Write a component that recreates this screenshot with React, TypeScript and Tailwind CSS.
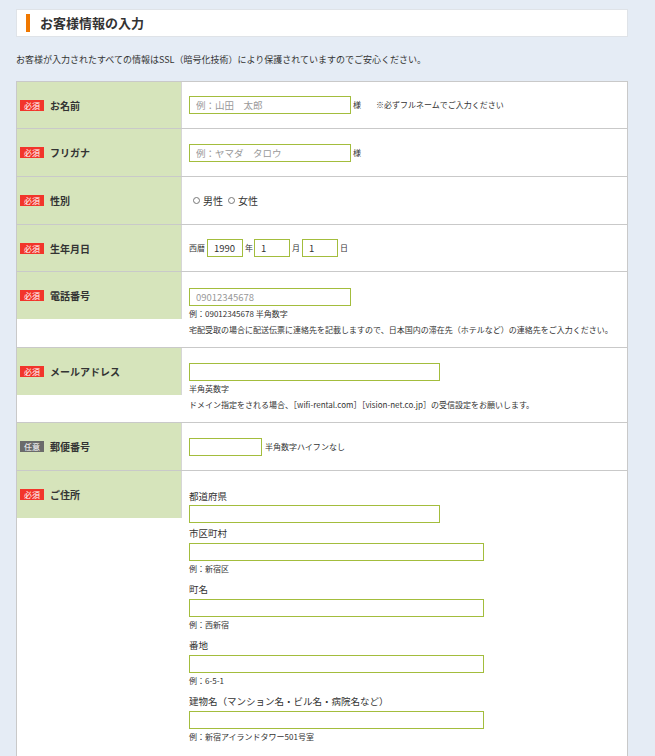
import type { ReactNode } from "react";

function Badge({ optional }: { optional?: boolean }) {
  return (
    <span
      className={
        optional
          ? "inline-block w-[24px] h-[11px] bg-[#6b6b6b] text-white text-[8px] leading-[11px] text-center"
          : "inline-block w-[24px] h-[11px] bg-[#f2352b] text-white text-[8px] leading-[11px] text-center"
      }
    >
      {optional ? "任意" : "必須"}
    </span>
  );
}

function Row({
  label,
  optional,
  short,
  valueClass,
  children,
}: {
  label: string;
  optional?: boolean;
  short?: boolean;
  valueClass: string;
  children: ReactNode;
}) {
  return (
    <div className="flex border-b border-[#c9c9c9]">
      <div
        className={
          short
            ? "self-start w-[165px] h-[46px] shrink-0 bg-[#d6e4bb] border-r border-[#d6d6d6] flex items-center pl-[3px]"
            : "self-start w-[165px] h-[47px] shrink-0 bg-[#d6e4bb] border-r border-[#d6d6d6] flex items-center pl-[3px]"
        }
      >
        <Badge optional={optional} />
        <span className="ml-[6px] text-[10px] font-bold text-[#333]">{label}</span>
      </div>
      <div className={valueClass}>{children}</div>
    </div>
  );
}

function Field({ w, placeholder, value }: { w: string; placeholder?: string; value?: string }) {
  return (
    <input
      className={
        "block h-[18px] border border-[#a3bd3d] bg-white px-[6px] text-[9.5px] text-[#333] placeholder:text-[#999] outline-none " +
        w
      }
      placeholder={placeholder}
      defaultValue={value}
    />
  );
}

function Note({ children }: { children: ReactNode }) {
  return <p className="text-[8px] leading-[16px] text-[#333]">{children}</p>;
}

function SubLabel({ children }: { children: ReactNode }) {
  return <p className="mt-[4px] mb-[2px] text-[9.5px] leading-[16px] text-[#333]">{children}</p>;
}

function Radio({ label }: { label: string }) {
  return (
    <span className="flex items-center">
      <span className="w-[7px] h-[7px] rounded-full border border-[#777] bg-white" />
      <span className="ml-[3px] text-[10px] text-[#333]">{label}</span>
    </span>
  );
}

export default function App() {
  return (
    <div className="h-[756px] overflow-hidden bg-[#e5ecf5] pl-[16px] pr-[27px] pt-[9px] font-['Noto_Sans_CJK_JP','Noto_Sans',sans-serif]">
      {/* Section header */}
      <div className="h-[28px] bg-white border border-[#dfe3e8] flex items-center pl-[9px]">
        <div className="w-[4px] h-[18px] bg-[#f07800]" />
        <h1 className="ml-[10px] text-[13px] font-bold text-[#333]">お客様情報の入力</h1>
      </div>

      <p className="mt-[16px] text-[9px] leading-[14px] text-[#333]">
        お客様が入力されたすべての情報はSSL（暗号化技術）により保護されていますのでご安心ください。
      </p>

      {/* Form table */}
      <div className="mt-[14px] border-t border-x border-[#c9c9c9] bg-white">
        <Row label="お名前" short valueClass="flex-1 pl-[7px] flex items-center">
          <Field w="w-[162px]" placeholder="例：山田　太郎" />
          <span className="ml-[2px] text-[8px] text-[#333]">様</span>
          <span className="ml-[15px] text-[8px] text-[#333]">※必ずフルネームでご入力ください</span>
        </Row>

        <Row label="フリガナ" valueClass="flex-1 pl-[7px] flex items-center">
          <Field w="w-[162px]" placeholder="例：ヤマダ　タロウ" />
          <span className="ml-[2px] text-[8px] text-[#333]">様</span>
        </Row>

        <Row label="性別" valueClass="flex-1 pl-[11px] flex items-center gap-[5px]">
          <Radio label="男性" />
          <Radio label="女性" />
        </Row>

        <Row label="生年月日" short valueClass="flex-1 pl-[7px] flex items-center text-[8px] text-[#333]">
          <span className="mr-[2px]">西暦</span>
          <Field w="w-[36px]" value="1990" />
          <span className="ml-[2px] mr-[1px]">年</span>
          <Field w="w-[36px]" value="1" />
          <span className="ml-[2px] mr-[2px]">月</span>
          <Field w="w-[36px]" value="1" />
          <span className="ml-[2px]">日</span>
        </Row>

        <Row label="電話番号" valueClass="flex-1 pl-[7px] pt-[16px] pb-[9px]">
          <Field w="w-[162px]" placeholder="09012345678" />
          <Note>例：09012345678 半角数字</Note>
          <Note>
            宅配受取の場合に配送伝票に連絡先を記載しますので、日本国内の滞在先（ホテルなど）の連絡先をご入力ください。
          </Note>
        </Row>

        <Row label="メールアドレス" valueClass="flex-1 pl-[7px] pt-[15px] pb-[9px]">
          <Field w="w-[251px]" />
          <Note>半角英数字</Note>
          <Note>ドメイン指定をされる場合、［wifi-rental.com］［vision-net.co.jp］の受信設定をお願いします。</Note>
        </Row>

        <Row label="郵便番号" optional valueClass="flex-1 pl-[7px] flex items-center">
          <Field w="w-[73px]" />
          <span className="ml-[3px] text-[8px] text-[#333]">半角数字ハイフンなし</span>
        </Row>

        <Row label="ご住所" valueClass="flex-1 pl-[7px] pt-[17px] pb-[20px]">
          <p className="mb-[1px] text-[9.5px] leading-[16px] text-[#333]">都道府県</p>
          <Field w="w-[251px]" />
          <p className="mt-[2px] mb-[2px] text-[9.5px] leading-[16px] text-[#333]">市区町村</p>
          <Field w="w-[295px]" />
          <Note>例：新宿区</Note>
          <SubLabel>町名</SubLabel>
          <Field w="w-[295px]" />
          <Note>例：西新宿</Note>
          <SubLabel>番地</SubLabel>
          <Field w="w-[295px]" />
          <Note>例：6-5-1</Note>
          <SubLabel>建物名（マンション名・ビル名・病院名など）</SubLabel>
          <Field w="w-[295px]" />
          <Note>例：新宿アイランドタワー501号室</Note>
        </Row>
      </div>
    </div>
  );
}
